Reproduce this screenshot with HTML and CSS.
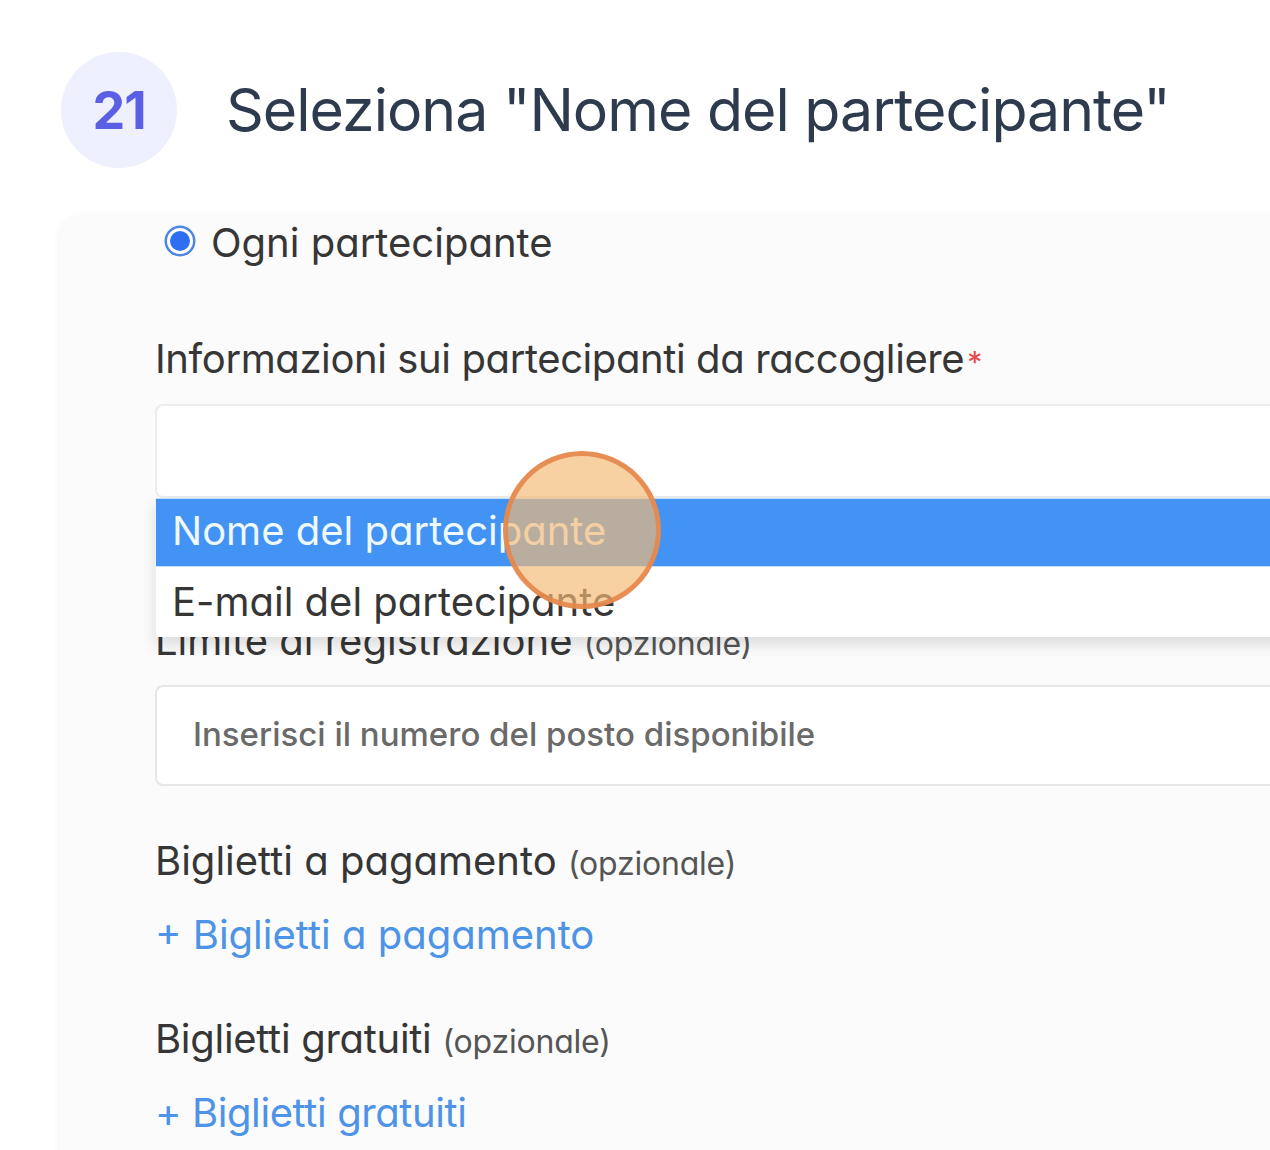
FILE: index.html
```html
<!DOCTYPE html>
<html lang="it">
<head>
<meta charset="utf-8">
<title>Passo 21</title>
<link rel="stylesheet" href="styles.css">
</head>
<body>
<header class="step">
  <div class="badge">21</div>
  <h1 class="title">Seleziona "Nome del partecipante"</h1>
</header>
<section class="card">
  <div class="radio-row">
    <span class="radio"></span>
    <span class="radio-text">Ogni partecipante</span>
  </div>
  <div class="label label-info">Informazioni sui partecipanti da raccogliere<span class="req">*</span></div>
  <div class="select-wrap">
    <div class="select"></div>
    <ul class="menu">
      <li class="opt opt-active">Nome del partecipante</li>
      <li class="opt">E-mail del partecipante</li>
    </ul>
  </div>
  <div class="label label-limit">Limite di registrazione <span class="opt-note">(opzionale)</span></div>
  <div class="input">Inserisci il numero del posto disponibile</div>
  <div class="label label-paid">Biglietti a pagamento <span class="opt-note">(opzionale)</span></div>
  <div class="link link-paid">+ Biglietti a pagamento</div>
  <div class="label label-free">Biglietti gratuiti <span class="opt-note">(opzionale)</span></div>
  <div class="link link-free">+ Biglietti gratuiti</div>
</section>
<div class="click-marker"></div>
</body>
</html>
```
FILE: styles.css
```css
html, body {
  margin: 0;
  padding: 0;
  background: #ffffff;
  overflow: hidden;
}
body {
  width: 1270px;
  height: 1150px;
  position: relative;
  font-family: "Inter", "Noto Sans", sans-serif;
}
.step {
  display: flex;
  align-items: center;
  gap: 49px;
  padding: 52px 0 0 61px;
  height: 116px;
}
.badge {
  width: 116px;
  height: 116px;
  border-radius: 50%;
  background: #eef0fd;
  color: #5b5fe3;
  font-weight: 700;
  font-size: 52px;
  display: flex;
  align-items: center;
  justify-content: center;
  letter-spacing: -1px;
  flex: none;
}
.title {
  margin: 0;
  font-size: 59px;
  line-height: 70px;
  font-weight: 400;
  color: #2e3a4e;
  letter-spacing: -1px;
  white-space: nowrap;
}
.card {
  margin: 49px 0 0 60px;
  width: 1300px;
  height: 1000px;
  background: #fbfbfb;
  border-radius: 22px 0 0 0;
  box-shadow: 0 0 10px rgba(0, 0, 0, 0.06);
  padding: 0 0 0 95px;
  box-sizing: border-box;
  font-feature-settings: "cv11" 1;
  color: #363636;
  font-size: 40px;
}
.radio-row {
  display: flex;
  align-items: center;
  height: 52px;
  padding-left: 12px;
}
.radio {
  width: 20px;
  height: 20px;
  border-radius: 50%;
  background: #2f6ef0;
  border: 3px solid #ffffff;
  box-shadow: 0 0 0 2.5px #4f86e4;
  flex: none;
  margin-top: -5px;
}
.radio-text {
  margin-left: 18px;
  font-size: 40px;
  line-height: 50px;
}
.label {
  font-size: 40px;
  line-height: 50px;
  white-space: nowrap;
}
.label-info {
  margin-top: 65px;
  letter-spacing: -0.4px;
}
.req {
  color: #e5474b;
  font-size: 30px;
  line-height: 1;
  margin-left: 3px;
}
.opt-note {
  font-size: 32px;
  line-height: 1;
  color: #555555;
  letter-spacing: -0.2px;
}
.select-wrap {
  position: relative;
  margin-top: 20px;
}
.select {
  height: 90px;
  border: 2px solid #ececec;
  border-right: none;
  border-radius: 8px 0 0 8px;
  background: #ffffff;
}
.menu {
  position: absolute;
  left: 0;
  right: 0;
  top: 94px;
  margin: 0;
  padding: 0;
  list-style: none;
  background: #ffffff;
  box-shadow: 0 8px 14px rgba(0, 0, 0, 0.12);
  border-left: 1px solid #f0f0f0;
  z-index: 2;
}
.opt {
  height: 70px;
  line-height: 70px;
  padding-left: 16px;
  font-size: 40px;
  color: #363636;
  white-space: nowrap;
}
.opt-active {
  height: 65px;
  line-height: 65px;
  padding-bottom: 4px;
  background: #4293f3;
  color: #eef8ff;
  box-shadow: inset 0 1px 0 #bfe3ff, inset 0 -1px 0 #bfe3ff;
}
.label-limit { margin-top: 118px; }
.input {
  margin-top: 19px;
  height: 94px;
  padding-bottom: 3px;
  border: 2px solid #e6e6e6;
  border-right: none;
  border-radius: 8px 0 0 8px;
  background: #ffffff;
  padding-left: 36px;
  line-height: 94px;
  font-size: 33px;
  font-weight: 500;
  color: #6a6a6a;
  white-space: nowrap;
}
.label-paid { margin-top: 50px; }
.label-free {
  margin-top: 54px;
  letter-spacing: -0.3px;
}
.link {
  margin-top: 24px;
  font-size: 40px;
  line-height: 50px;
  color: #4d93e6;
  white-space: nowrap;
}
.link-free { letter-spacing: -0.4px; }
.click-marker {
  position: absolute;
  left: 503px;
  top: 451px;
  width: 148px;
  height: 148px;
  border-radius: 50%;
  border: 5px solid rgba(230, 135, 75, 0.9);
  background: rgba(245, 186, 118, 0.67);
  z-index: 5;
}
```
